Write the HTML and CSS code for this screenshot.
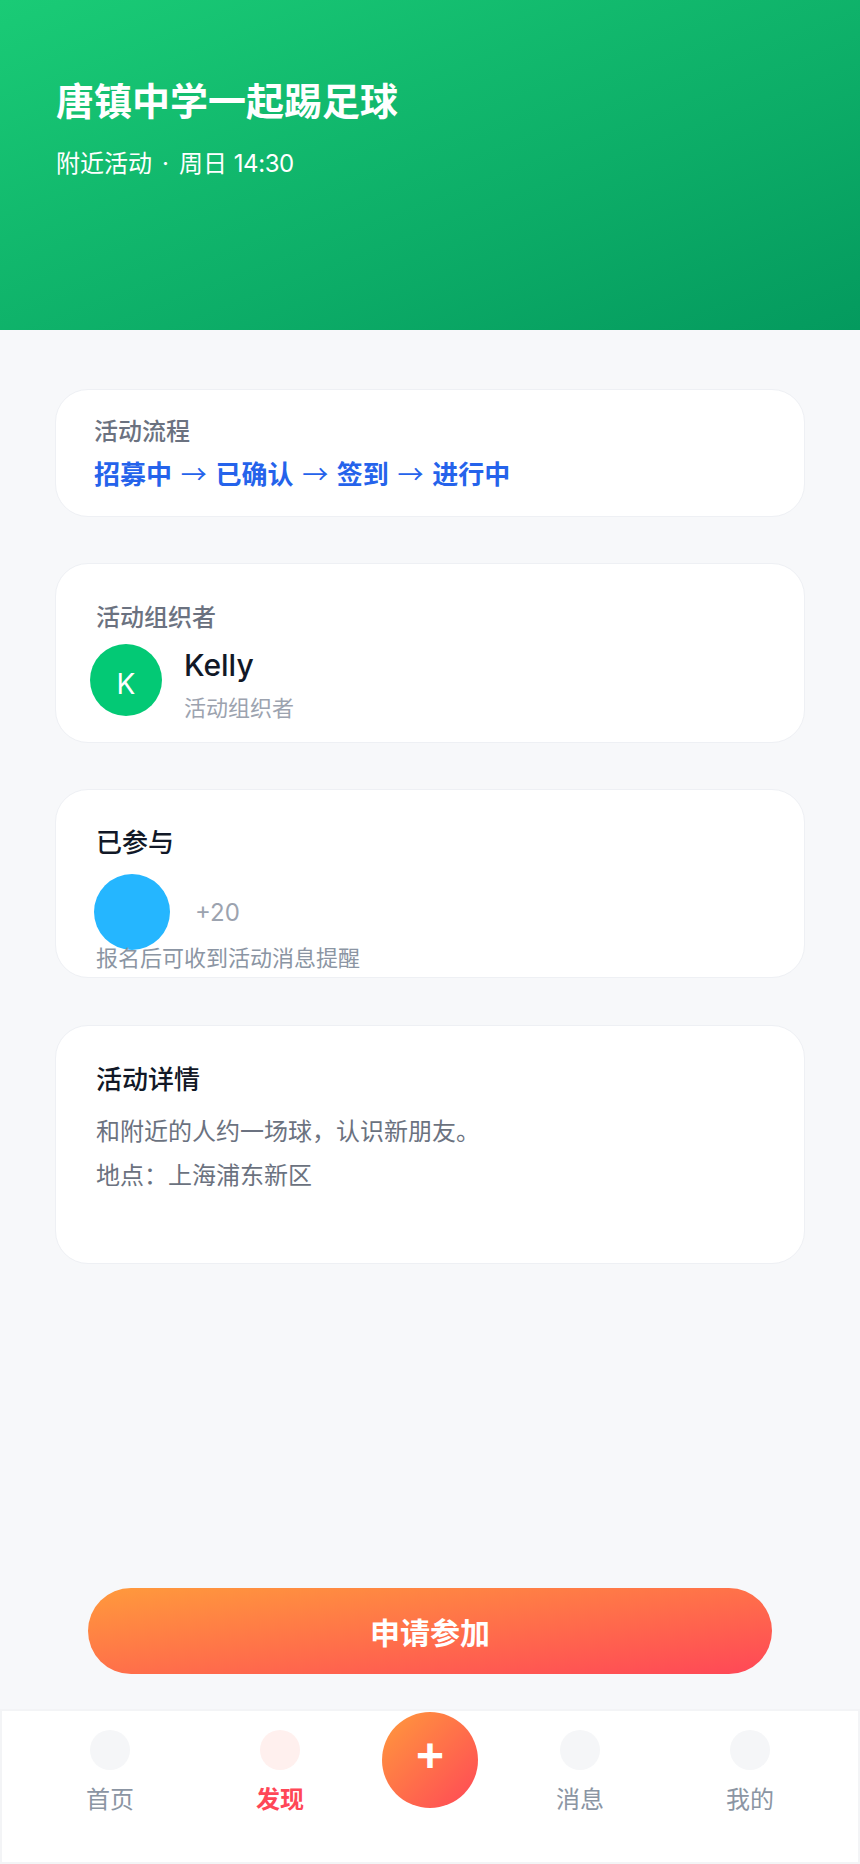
FILE: index.html
```html
<!DOCTYPE html>
<html lang="zh-CN">
<head>
    <meta charset="UTF-8">
    <meta name="viewport" content="width=device-width, initial-scale=1.0">
    <title>活动详情</title>
    <link rel="stylesheet" href="styles.css">
</head>
<body>

<div class="page">
    <header class="hero">
        <h1 class="hero_title">唐镇中学一起踢足球</h1>
        <p class="hero_sub">附近活动<span class="hero_dot">·</span>周日 <span class="hero_time">14:30</span></p>
    </header>

    <main class="content">
        <section class="card card_flow">
            <div class="label">活动流程</div>
            <div class="flow">招募中 <span class="flow_arrow">→</span> 已确认 <span class="flow_arrow">→</span> 签到 <span class="flow_arrow">→</span> 进行中</div>
        </section>

        <section class="card card_host">
            <div class="label">活动组织者</div>
            <div class="host">
                <div class="host_avatar">K</div>
                <div class="host_info">
                    <div class="host_name">Kelly</div>
                    <div class="host_role">活动组织者</div>
                </div>
            </div>
        </section>

        <section class="card card_joined">
            <div class="card_title">已参与</div>
            <div class="joined">
                <div class="joined_avatar"></div>
                <div class="joined_count">+20</div>
            </div>
            <div class="joined_tip">报名后可收到活动消息提醒</div>
        </section>

        <section class="card card_detail">
            <div class="card_title">活动详情</div>
            <p class="detail_line">和附近的人约一场球，认识新朋友。</p>
            <p class="detail_line">地点：上海浦东新区</p>
        </section>
    </main>

    <button type="button" class="apply">申请参加</button>

    <nav class="tabbar">
        <div class="tab">
            <span class="tab_icon"></span>
            <span class="tab_label">首页</span>
        </div>
        <div class="tab tab_active">
            <span class="tab_icon"></span>
            <span class="tab_label">发现</span>
        </div>
        <div class="tab_center">
            <div class="fab">+</div>
        </div>
        <div class="tab">
            <span class="tab_icon"></span>
            <span class="tab_label">消息</span>
        </div>
        <div class="tab">
            <span class="tab_icon"></span>
            <span class="tab_label">我的</span>
        </div>
    </nav>
</div>

</body>
</html>
```

FILE: styles.css
```css
* {
    margin: 0;
    padding: 0;
    box-sizing: border-box;
}
body {
    font-family: Inter, "Noto Sans CJK SC", sans-serif;
    background-color: #f7f8fa;
}
.page {
    display: flex;
    flex-direction: column;
    height: 1864px;
}
.hero {
    height: 330px;
    padding: 77px 56px 0;
    background: linear-gradient(to bottom right, #1acb76, #049a5e);
    color: #fff;
}
.hero_title {
    font-size: 38px;
    line-height: 48px;
    font-weight: 700;
}
.hero_sub {
    margin-top: 21px;
    font-size: 24px;
    line-height: 36px;
}
.hero_dot {
    margin: 0 10px;
}
.hero_time {
    letter-spacing: -0.4px;
}
.content {
    display: flex;
    flex-direction: column;
    gap: 46px;
    padding: 59px 55px 0;
}
.card {
    background-color: #fff;
    border: 1px solid #eef0f4;
    border-radius: 33px;
    padding-left: 40px;
    padding-right: 40px;
}
.label {
    font-size: 24px;
    line-height: 34px;
    font-weight: 500;
    color: #6b7280;
}
.card_title {
    font-size: 26px;
    line-height: 36px;
    font-weight: 500;
    color: #111827;
}
.card_flow {
    height: 128px;
    padding: 25px 38px 0;
}
.flow {
    margin-top: 6px;
    font-family: "Noto Sans CJK SC", sans-serif;
    font-size: 26px;
    line-height: 36px;
    font-weight: 700;
    word-spacing: 2.8px;
    color: #2563eb;
}
.flow_arrow {
    font-weight: 400;
}
.card_host {
    height: 180px;
    padding-top: 37px;
}
.host {
    display: flex;
    margin-top: 9px;
}
.host_avatar {
    width: 72px;
    height: 72px;
    margin-left: -6px;
    padding-top: 7px;
    border-radius: 50%;
    background-color: #03c975;
    color: #fff;
    font-size: 28px;
    display: flex;
    align-items: center;
    justify-content: center;
}
.host_info {
    margin-left: 22px;
    padding-top: 1px;
}
.host_name {
    font-size: 30px;
    line-height: 40px;
    font-weight: 500;
    color: #111827;
}
.host_role {
    margin-top: 7px;
    font-size: 22px;
    line-height: 32px;
    color: #9ca3af;
}
.card_joined {
    height: 189px;
    padding-top: 35px;
}
.joined {
    display: flex;
    align-items: center;
    height: 76px;
    margin-top: 13px;
}
.joined_avatar {
    width: 76px;
    height: 76px;
    margin-left: -2px;
    border-radius: 50%;
    background-color: #25b6ff;
}
.joined_count {
    margin-left: 25px;
    padding-top: 2px;
    font-size: 24px;
    line-height: 36px;
    color: #9ca3af;
}
.joined_tip {
    margin-top: -8px;
    font-size: 22px;
    line-height: 32px;
    color: #8b95a3;
}
.card_detail {
    height: 239px;
    margin-top: 1px;
    padding-top: 36px;
}
.card_detail .card_title {
    margin-bottom: 12px;
}
.detail_line {
    font-size: 24px;
    line-height: 44px;
    color: #6b7280;
}
.apply {
    height: 86px;
    margin: auto 88px 35px;
    border: none;
    border-radius: 43px;
    background: linear-gradient(to bottom right, #ff9a3c, #ff4757);
    color: #fff;
    font-family: inherit;
    font-size: 30px;
    font-weight: 600;
}
.tabbar {
    display: flex;
    height: 155px;
    padding: 0 23px;
    background-color: #fff;
    border: 2px solid #f3f4f6;
}
.tab {
    width: 170px;
    padding-top: 19px;
    display: flex;
    flex-direction: column;
    align-items: center;
}
.tab_icon {
    width: 40px;
    height: 40px;
    border-radius: 50%;
    background-color: #f5f6f8;
}
.tab_label {
    margin-top: 13px;
    font-size: 24px;
    line-height: 34px;
    color: #8b95a3;
}
.tab_active .tab_icon {
    background-color: #fff0ee;
}
.tab_active .tab_label {
    color: #ff4757;
    font-weight: 600;
}
.tab_center {
    flex: 1;
    display: flex;
    justify-content: center;
    padding-top: 1px;
}
.fab {
    width: 96px;
    height: 96px;
    border-radius: 50%;
    background: linear-gradient(135deg, #ff9a3c, #ff4757);
    color: #fff;
    font-family: "Liberation Sans", sans-serif;
    font-size: 48px;
    font-weight: 700;
    line-height: 87px;
    text-align: center;
}
```
